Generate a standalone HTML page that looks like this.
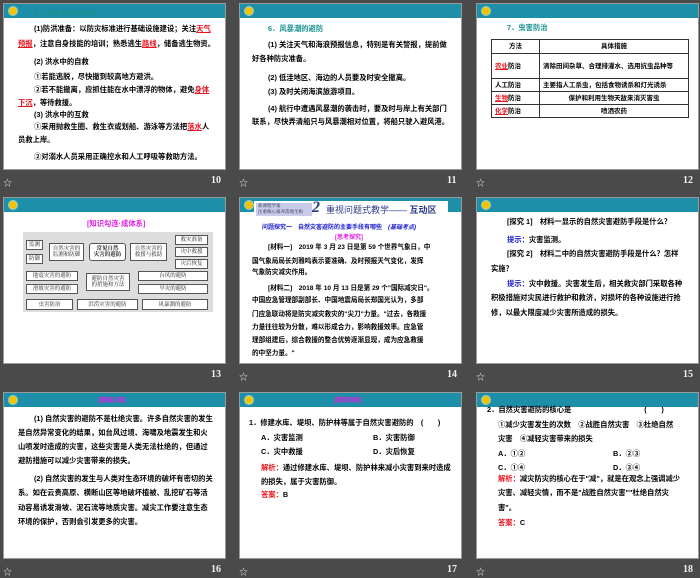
<!DOCTYPE html>
<html><head><meta charset="utf-8"><style>
*{margin:0;padding:0;box-sizing:border-box}
body{width:700px;height:576px;background:#4a4a4a;position:relative;overflow:hidden;font-family:"Liberation Serif","Noto Serif CJK SC","Noto Sans CJK SC",serif}
.s{position:absolute;width:223px;height:167px;background:#fff;border:1px solid #9a9a9a;overflow:hidden}
.h{position:absolute;left:0;top:0;width:100%;height:14px;background:#1e8fa9}
.c{position:absolute;left:4px;top:2px;width:10px;height:10px;border-radius:50%;background:#f2c400;border:1.5px solid #8fd0de}
.t{position:absolute;font-size:7.3px;line-height:8px;font-weight:bold;white-space:nowrap;color:#000;font-family:"Liberation Sans","Noto Sans CJK SC",sans-serif}
.r{color:#e8141e}.b{color:#1a1acc}.m{color:#e020e0}.g{color:#1a9090}
.u{text-decoration:underline;color:#e8141e}
.n{position:absolute;color:#f0f0f0;font:bold 10px "Liberation Serif",serif}
.st{position:absolute;color:#ddd;font-size:9px}
.bx{position:absolute;border:1px solid #555;background:#fff;font-size:5.5px;line-height:6px;text-align:center;display:flex;align-items:center;justify-content:center;color:#222;font-family:"Liberation Serif","Noto Serif CJK SC",serif}
table{position:absolute;border-collapse:collapse;font-size:6.5px;font-weight:bold;font-family:"Liberation Sans","Noto Sans CJK SC",sans-serif}
td{border:1px solid #333;padding:1px 3px;line-height:7px}
</style></head><body>

<!-- slide 10 -->
<div class="s" style="left:3px;top:3px"><div class="h"><div class="c"></div></div>
<div class="t g" style="left:30px;top:6px">5．洪涝灾害的避防</div>
<div class="t" style="left:30px;top:21px">(1)防洪准备：以防灾标准进行基础设施建设；关注<span class="u">天气</span></div>
<div class="t" style="left:14px;top:36px"><span class="u">预报</span>，注意自身技能的培训；熟悉逃生<span class="u">路线</span>，储备逃生物资。</div>
<div class="t" style="left:30px;top:54px">(2) 洪水中的自救</div>
<div class="t" style="left:30px;top:69px">①若能逃脱，尽快撤到较高地方避洪。</div>
<div class="t" style="left:30px;top:82px">②若不能撤离，应抓住能在水中漂浮的物体，避免<span class="u">身体</span></div>
<div class="t" style="left:14px;top:95px"><span class="u">下沉</span>，等待救援。</div>
<div class="t" style="left:30px;top:107px">(3) 洪水中的互救</div>
<div class="t" style="left:30px;top:119px">①采用抛救生圈、救生衣或划船、游泳等方法把<span class="u">落水</span>人</div>
<div class="t" style="left:14px;top:132px">员救上岸。</div>
<div class="t" style="left:30px;top:149px">②对溺水人员采用正确控水和人工呼吸等救助方法。</div>
</div>
<div class="st" style="left:3px;top:176px">☆</div><div class="n" style="left:211px;top:175px">10</div>

<!-- slide 11 -->
<div class="s" style="left:239px;top:3px"><div class="h"><div class="c"></div></div>
<div class="t g" style="left:28px;top:21px">6．风暴潮的避防</div>
<div class="t" style="left:28px;top:37px">(1) 关注天气和海浪预报信息，特别是有关警报，提前做</div>
<div class="t" style="left:12px;top:51px">好各种防灾准备。</div>
<div class="t" style="left:28px;top:70px">(2) 低洼地区、海边的人员要及时安全撤离。</div>
<div class="t" style="left:28px;top:84px">(3) 及时关闭海滨旅游项目。</div>
<div class="t" style="left:28px;top:101px">(4) 航行中遭遇风暴潮的袭击时，要及时与岸上有关部门</div>
<div class="t" style="left:12px;top:114px">联系，尽快弄清船只与风暴潮相对位置，将船只驶入避风港。</div>
</div>
<div class="st" style="left:239px;top:176px">☆</div><div class="n" style="left:447px;top:175px">11</div>

<!-- slide 12 -->
<div class="s" style="left:476px;top:3px"><div class="h"><div class="c"></div></div>
<div class="t g" style="left:30px;top:20px">7．虫害防治</div>
<table style="left:14px;top:35px;width:198px">
<tr style="height:14px"><td style="width:48px;text-align:center">方法</td><td style="text-align:center">具体措施</td></tr>
<tr style="height:25px"><td><span class="u">农业</span>防治</td><td>清除田间杂草、合理排灌水、选用抗虫品种等</td></tr>
<tr style="height:13px"><td>人工防治</td><td>主要指人工杀虫，包括食物诱杀和灯光诱杀</td></tr>
<tr style="height:13px"><td><span class="u">生物</span>防治</td><td style="text-align:center">保护和利用生物天敌来消灭害虫</td></tr>
<tr style="height:13px"><td><span class="u">化学</span>防治</td><td style="text-align:center">喷洒农药</td></tr>
</table>
</div>
<div class="st" style="left:476px;top:176px">☆</div><div class="n" style="left:683px;top:175px">12</div>

<!-- slide 13 -->
<div class="s" style="left:3px;top:197px"><div class="h"><div class="c"></div></div>
<div class="t m" style="left:83px;top:22px">[知识勾连·成体系]</div>
<div style="position:absolute;left:19px;top:34px;width:190px;height:80px;background:#ddd"></div>
<div class="bx" style="left:22px;top:42px;width:17px;height:10px">监测</div>
<div class="bx" style="left:22px;top:56px;width:17px;height:10px">防御</div>
<div class="bx" style="left:45px;top:45px;width:35px;height:18px">自然灾害的<br>监测和防御</div>
<div class="bx" style="left:85px;top:45px;width:37px;height:18px;border-radius:3px;font-weight:bold">常见自然<br>灾害的避防</div>
<div class="bx" style="left:126px;top:45px;width:37px;height:18px">自然灾害的<br>救援与救助</div>
<div class="bx" style="left:171px;top:37px;width:33px;height:10px">救灾准备</div>
<div class="bx" style="left:171px;top:49px;width:33px;height:10px">灾中救援</div>
<div class="bx" style="left:171px;top:61px;width:33px;height:10px">灾后恢复</div>
<div class="bx" style="left:22px;top:73px;width:52px;height:10px">地震灾害的避防</div>
<div class="bx" style="left:22px;top:86px;width:52px;height:10px">滑坡灾害的避防</div>
<div class="bx" style="left:82px;top:75px;width:44px;height:18px">避防自然灾害<br>的措施和方法</div>
<div class="bx" style="left:134px;top:73px;width:70px;height:10px">台风的避防</div>
<div class="bx" style="left:134px;top:86px;width:70px;height:10px">旱灾的避防</div>
<div class="bx" style="left:22px;top:101px;width:47px;height:11px">虫害防治</div>
<div class="bx" style="left:73px;top:101px;width:61px;height:11px">洪涝灾害的避防</div>
<div class="bx" style="left:138px;top:101px;width:66px;height:11px">风暴潮的避防</div>
</div>
<div class="n" style="left:211px;top:369px">13</div>

<!-- slide 14 -->
<div class="s" style="left:239px;top:197px"><div class="h"><div class="c"></div></div>
<div style="position:absolute;left:14px;top:3px;width:194px;height:18px;background:#fff"></div>
<div style="position:absolute;left:16px;top:5px;width:56px;height:13px;background:#c8cce8;font-size:4.5px;line-height:6px;color:#224;padding-left:2px">新课程学案<br>注重核心素养落地生根</div>
<div style="position:absolute;left:72px;top:1px;font:italic bold 16px 'Liberation Serif',serif;color:#223a8a">2</div>
<div style="position:absolute;left:86px;top:5px;font-size:9px;color:#2a3a8a;white-space:nowrap;font-family:'Liberation Sans','Noto Sans CJK SC',sans-serif">重视问题式教学—— <b>互动区</b></div>
<div class="t b" style="left:22px;top:26px;font-size:6px">问题探究一　自然灾害避防的主要手段有哪些　<i>(基础考点)</i></div>
<div class="t m" style="left:95px;top:36px;font-size:6px">[思考探究]</div>
<div class="t" style="left:28px;top:46px;font-size:6.6px">[材料一]　2019 年 3 月 23 日是第 59 个世界气象日，中</div>
<div class="t" style="left:12px;top:60px;font-size:6.6px">国气象局局长刘雅鸣表示要准确、及时预报天气变化，发挥</div>
<div class="t" style="left:12px;top:71px;font-size:6.6px">气象防灾减灾作用。</div>
<div class="t" style="left:28px;top:87px;font-size:6.6px">[材料二]　2018 年 10 月 13 日是第 29 个"国际减灾日"。</div>
<div class="t" style="left:12px;top:99px;font-size:6.6px">中国应急管理部副部长、中国地震局局长郑国光认为，多部</div>
<div class="t" style="left:12px;top:113px;font-size:6.6px">门应急联动将是防灾减灾救灾的"尖刀"力量。"过去，各救援</div>
<div class="t" style="left:12px;top:126px;font-size:6.6px">力量往往较为分散，难以形成合力，影响救援效率。应急管</div>
<div class="t" style="left:12px;top:139px;font-size:6.6px">理部组建后，综合救援的整合优势逐渐显现，成为应急救援</div>
<div class="t" style="left:12px;top:152px;font-size:6.6px">的中坚力量。"</div>
</div>
<div class="st" style="left:239px;top:370px">☆</div><div class="n" style="left:447px;top:369px">14</div>

<!-- slide 15 -->
<div class="s" style="left:476px;top:197px"><div class="h"><div class="c"></div></div>
<div class="t" style="left:30px;top:20px">[探究 1]　材料一显示的自然灾害避防手段是什么？</div>
<div class="t" style="left:30px;top:38px"><span class="b">提示：</span>灾害监测。</div>
<div class="t" style="left:30px;top:52px">[探究 2]　材料二中的自然灾害避防手段是什么？怎样</div>
<div class="t" style="left:14px;top:67px">实施？</div>
<div class="t" style="left:30px;top:82px"><span class="b">提示：</span>灾中救援。灾害发生后，相关救灾部门采取各种</div>
<div class="t" style="left:14px;top:96px">积极措施对灾民进行救护和救济，对损坏的各种设施进行抢</div>
<div class="t" style="left:14px;top:111px">修，以最大限度减少灾害所造成的损失。</div>
</div>
<div class="st" style="left:476px;top:370px">☆</div><div class="n" style="left:683px;top:369px">15</div>

<!-- slide 16 -->
<div class="s" style="left:3px;top:392px"><div class="h"><div class="c"></div><div class="t m" style="left:94px;top:4px;font-size:6px">[基础认知]</div></div>
<div class="t" style="left:30px;top:22px">(1) 自然灾害的避防不是杜绝灾害。许多自然灾害的发生</div>
<div class="t" style="left:14px;top:36px">是自然异常变化的结果，如台风过境、海啸及地震发生和火</div>
<div class="t" style="left:14px;top:50px">山喷发时造成的灾害，这些灾害是人类无法杜绝的，但通过</div>
<div class="t" style="left:14px;top:64px">避防措施可以减少灾害带来的损失。</div>
<div class="t" style="left:30px;top:82px">(2) 自然灾害的发生与人类对生态环境的破坏有密切的关</div>
<div class="t" style="left:14px;top:96px">系。如在云贵高原、横断山区等地破坏植被、乱挖矿石等活</div>
<div class="t" style="left:14px;top:111px">动容易诱发滑坡、泥石流等地质灾害。减灾工作要注意生态</div>
<div class="t" style="left:14px;top:125px">环境的保护，否则会引发更多的灾害。</div>
</div>
<div class="st" style="left:3px;top:565px">☆</div><div class="n" style="left:211px;top:564px">16</div>

<!-- slide 17 -->
<div class="s" style="left:239px;top:392px"><div class="h"><div class="c"></div><div class="t m" style="left:94px;top:4px;font-size:6px">[跟踪训练]</div></div>
<div class="t" style="left:9px;top:26px">1．修建水库、堤坝、防护林等属于自然灾害避防的　(　　)</div>
<div class="t" style="left:21px;top:41px">A．灾害监测</div><div class="t" style="left:133px;top:41px">B．灾害防御</div>
<div class="t" style="left:21px;top:55px">C．灾中救援</div><div class="t" style="left:133px;top:55px">D．灾后恢复</div>
<div class="t" style="left:21px;top:71px"><span class="r">解析：</span>通过修建水库、堤坝、防护林来减小灾害到来时造成</div>
<div class="t" style="left:21px;top:85px">的损失，属于灾害防御。</div>
<div class="t" style="left:21px;top:98px"><span class="r">答案：</span>B</div>
</div>
<div class="st" style="left:239px;top:565px">☆</div><div class="n" style="left:447px;top:564px">17</div>

<!-- slide 18 -->
<div class="s" style="left:476px;top:392px"><div class="h"><div class="c"></div></div>
<div class="t" style="left:10px;top:13px">2．自然灾害避防的核心是　　　　　　　　　　(　　)</div>
<div class="t" style="left:21px;top:28px">①减少灾害发生的次数　②战胜自然灾害　③杜绝自然</div>
<div class="t" style="left:21px;top:42px">灾害　④减轻灾害带来的损失</div>
<div class="t" style="left:21px;top:57px">A．①②</div><div class="t" style="left:136px;top:57px">B．②③</div>
<div class="t" style="left:21px;top:71px">C．①④</div><div class="t" style="left:136px;top:71px">D．③④</div>
<div class="t" style="left:21px;top:82px"><span class="r">解析：</span>减灾防灾的核心在于"减"，就是在观念上强调减少</div>
<div class="t" style="left:21px;top:96px">灾害、减轻灾情，而不是"战胜自然灾害""杜绝自然灾</div>
<div class="t" style="left:21px;top:111px">害"。</div>
<div class="t" style="left:21px;top:126px"><span class="r">答案：</span>C</div>
</div>
<div class="st" style="left:476px;top:565px">☆</div><div class="n" style="left:683px;top:564px">18</div>

</body></html>
